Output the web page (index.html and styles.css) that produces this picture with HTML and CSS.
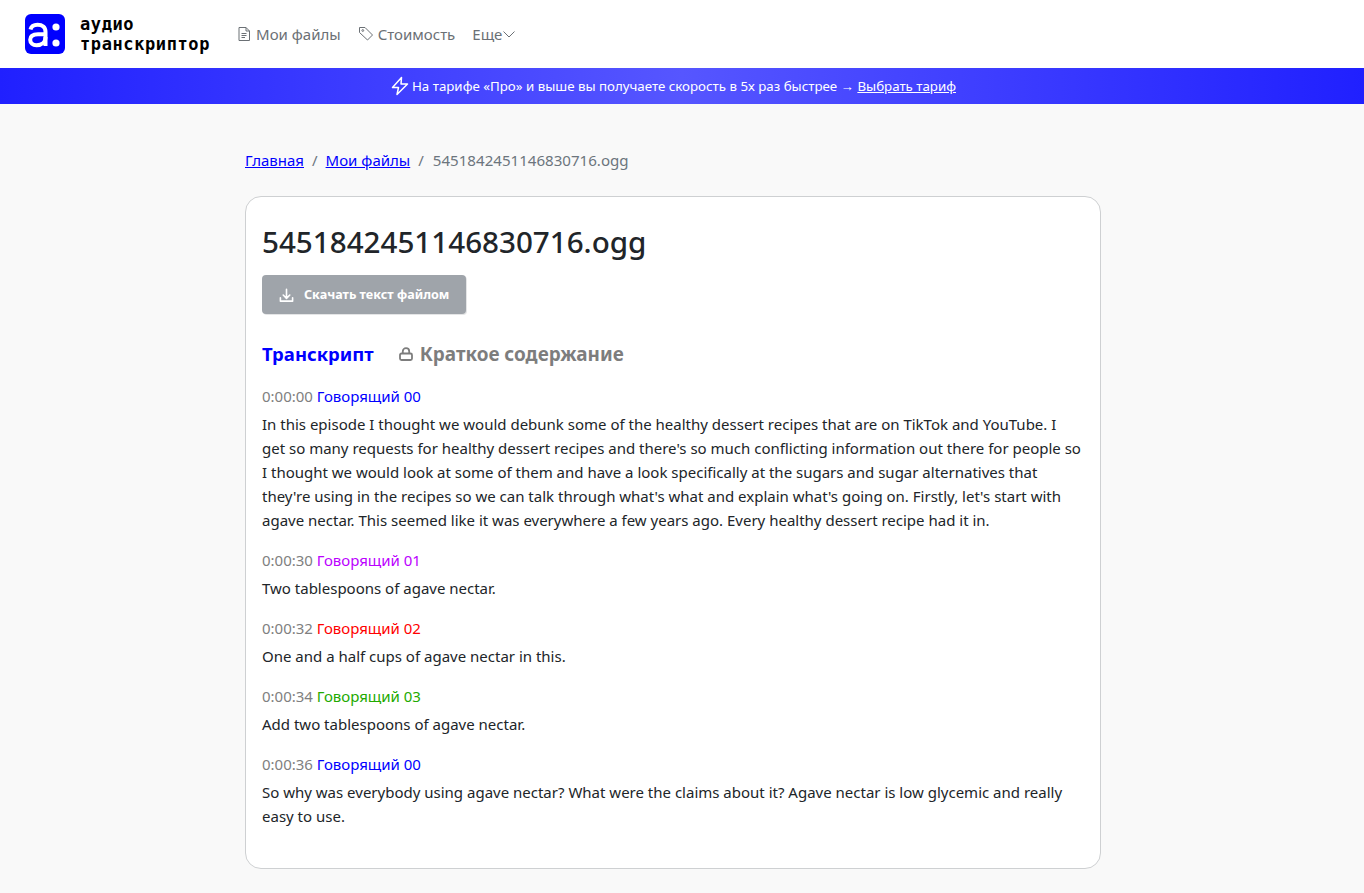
FILE: index.html
```html
<!DOCTYPE html>
<html lang="ru">
<head>
<meta charset="utf-8">
<title>Аудиотранскриптор</title>
<link rel="stylesheet" href="styles.css">
</head>
<body>
<header class="nav">
  <a class="brand" href="#">
    <svg class="logo" viewBox="0 0 40 40" width="40" height="40"><rect width="40" height="40" rx="6" fill="#0000ff"/><path d="M5.500 15.500c.8-3.200 3.400-4.800 7-4.800 4.900 0 8 2.400 8 7v14.300" fill="none" stroke="#fff" stroke-width="4"/><path d="M20.500 20.300h-7.500c-5 0-7.800 1.700-7.800 5.500 0 3.400 2.600 5.400 6.300 5.400 5.200 0 9-3.300 9-8.200" fill="none" stroke="#fff" stroke-width="4"/><circle cx="31" cy="13" r="3.600" fill="#fff"/><circle cx="31" cy="29" r="3.600" fill="#fff"/></svg>
    <span class="brand-text">аудио<br>транскриптор</span>
  </a>
  <nav class="menu">
    <a class="menu-item" href="#"><svg class="menu-icon" viewBox="0 0 16 16" width="16" height="16" fill="none" stroke="#6b7075" stroke-width="1"><path d="M3 1.500h7l3.500 3.500v9.500h-10.500z"/><path d="M10 1.500v3.500h3.500M5.500 7.500h5M5.500 9.500h5M5.500 11.500h3.500"/></svg>Мои файлы</a>
    <a class="menu-item" href="#"><svg class="menu-icon" viewBox="0 0 16 16" width="16" height="16" fill="none" stroke="#6b7075" stroke-width="1"><path d="M1.500 2.500h5.500l7.500 7.500-5 5-8-7.500z" transform="translate(0 -1)"/><circle cx="4.800" cy="4.500" r=".9"/></svg>Стоимость</a>
    <a class="menu-item more" href="#">Еще<svg viewBox="0 0 12 12" width="12" height="12" fill="none" stroke="#6b7075" stroke-width="1"><path d="M.5 3.500l5.500 5.500 5.500-5.500"/></svg></a>
  </nav>
</header>
<div class="promo">
  <svg class="bolt" viewBox="0 0 20 20" width="20" height="20" fill="none" stroke="#fff" stroke-width="1.500" stroke-linejoin="round"><path d="M11.500 1.500l-9 10h6l-1.500 7 10.500-10.500h-6.500l.5-6.500z"/></svg>
  <span>На тарифе «Про» и выше вы получаете скорость в 5х раз быстрее → <a class="promo-link" href="#">Выбрать тариф</a></span>
</div>
<div class="page-wrap">
<main class="page">
  <div class="crumbs"><a href="#">Главная</a><span class="sep">/</span><a href="#">Мои файлы</a><span class="sep">/</span><span class="current">5451842451146830716.ogg</span></div>
  <section class="card">
    <h1 class="title">5451842451146830716.ogg</h1>
    <button class="download" type="button"><svg viewBox="0 0 16 16" width="15" height="15" fill="none" stroke="#fff" stroke-width="1.700" stroke-linecap="round" stroke-linejoin="round"><path d="M8 1.500v9M4.500 7.500l3.500 3.500 3.500-3.500M1.500 10.500v3.500h13v-3.500"/></svg>Скачать текст файлом</button>
    <div class="tabs">
      <span class="tab active">Транскрипт</span>
      <span class="tab locked"><svg viewBox="0 0 16 16" width="16" height="16" fill="none" stroke="#7d7d7d" stroke-width="1.800"><rect x="2" y="7.500" width="12" height="6.500" rx="1.500"/><path d="M4.800 7.500v-2.200a3.200 3.200 0 0 1 6.400 0v2.200"/></svg>Краткое содержание</span>
    </div>
    <div class="segs">
    <article class="seg">
      <div class="meta"><span class="time">0:00:00</span> <span class="s0">Говорящий 00</span></div>
      <p>In this episode I thought we would debunk some of the healthy dessert recipes that are on TikTok and YouTube. I<br>get so many requests for healthy dessert recipes and there's so much conflicting information out there for people so<br>I thought we would look at some of them and have a look specifically at the sugars and sugar alternatives that<br>they're using in the recipes so we can talk through what's what and explain what's going on. Firstly, let's start with<br>agave nectar. This seemed like it was everywhere a few years ago. Every healthy dessert recipe had it in.</p>
    </article>
    <article class="seg">
      <div class="meta"><span class="time">0:00:30</span> <span class="s1">Говорящий 01</span></div>
      <p>Two tablespoons of agave nectar.</p>
    </article>
    <article class="seg">
      <div class="meta"><span class="time">0:00:32</span> <span class="s2">Говорящий 02</span></div>
      <p>One and a half cups of agave nectar in this.</p>
    </article>
    <article class="seg">
      <div class="meta"><span class="time">0:00:34</span> <span class="s3">Говорящий 03</span></div>
      <p>Add two tablespoons of agave nectar.</p>
    </article>
    <article class="seg">
      <div class="meta"><span class="time">0:00:36</span> <span class="s0">Говорящий 00</span></div>
      <p>So why was everybody using agave nectar? What were the claims about it? Agave nectar is low glycemic and really<br>easy to use.</p>
    </article>
    </div>
  </section>
</main>
</div>
</body>
</html>
```
FILE: styles.css
```css
* { box-sizing: border-box; }
html, body { margin: 0; padding: 0; }
body {
  background: #f9f9f9;
  color: #212529;
  font-family: "Noto Sans", "Open Sans", sans-serif;
  font-size: 15px;
  line-height: 24px;
  height: 893px;
  overflow: hidden;
}
.nav {
  display: flex;
  align-items: center;
  height: 68px;
  padding-left: 25px;
  background: #fff;
}
.brand { display: flex; align-items: center; gap: 15px; color: #000; text-decoration: none; }
.logo { display: block; }
.brand-text {
  font-family: "DejaVu Sans Mono", monospace;
  font-weight: 700;
  font-size: 17px;
  line-height: 20px;
  letter-spacing: .6px;
}
.menu { display: flex; align-items: center; gap: 17px; margin-left: 26px; }
.menu-item { display: flex; align-items: center; gap: 4px; color: #6b7075; text-decoration: none; font-size: 15px; }
.more { gap: 1px; }
.promo {
  display: flex;
  align-items: center;
  justify-content: center;
  gap: 2px;
  height: 36px;
  padding-right: 18px;
  color: #fff;
  font-size: 13.300px;
  background: linear-gradient(90deg, #2020ff 0%, #5656ff 50%, #2020ff 100%);
}
.promo-link { color: #fff; text-decoration: underline; }
.page-wrap { padding-right: 18px; }
.page { width: 856px; margin: 0 auto; padding-top: 44px; }
.crumbs { display: flex; height: 24px; align-items: center; color: #6c757d; font-size: 15px; }
.crumbs a { color: #0000ff; }
.sep { margin: 0 8px; }
.current { font-size: 15.100px; margin-left: 1px; }
.card {
  margin-top: 24px;
  height: 673px;
  padding: 16px;
  background: #fff;
  border: 1px solid #ced0d2;
  border-radius: 16px;
}
.title { margin: 7px 0 11px; font-size: 29.600px; line-height: 44px; font-weight: 500; color: #212529; }
.download {
  display: flex;
  align-items: center;
  gap: 10px;
  height: 39px;
  padding: 2px 17px 0;
  background: #9fa4aa;
  color: #fff;
  border: 0;
  border-radius: 4px;
  box-shadow: 1px 1px 0 #e4e5e6;
  font: 700 12.600px/1 "Noto Sans", sans-serif;
}
.tabs { display: flex; align-items: center; gap: 24px; margin-top: 28px; height: 24px; font-size: 18.900px; font-weight: 700; }
.tab { display: flex; align-items: center; gap: 6px; }
.active { color: #0000ff; font-size: 18.500px; }
.locked { color: #7d7d7d; }
.segs { padding-top: 2px; }
.seg { margin-top: 16px; }
.meta { height: 24px; margin-bottom: 4px; }
.seg p { margin: 0; }
.time { color: #808080; }
.s0 { color: #0000ff; }
.s1 { color: #bb00ff; }
.s2 { color: #ff0000; }
.s3 { color: #22aa00; }
```
